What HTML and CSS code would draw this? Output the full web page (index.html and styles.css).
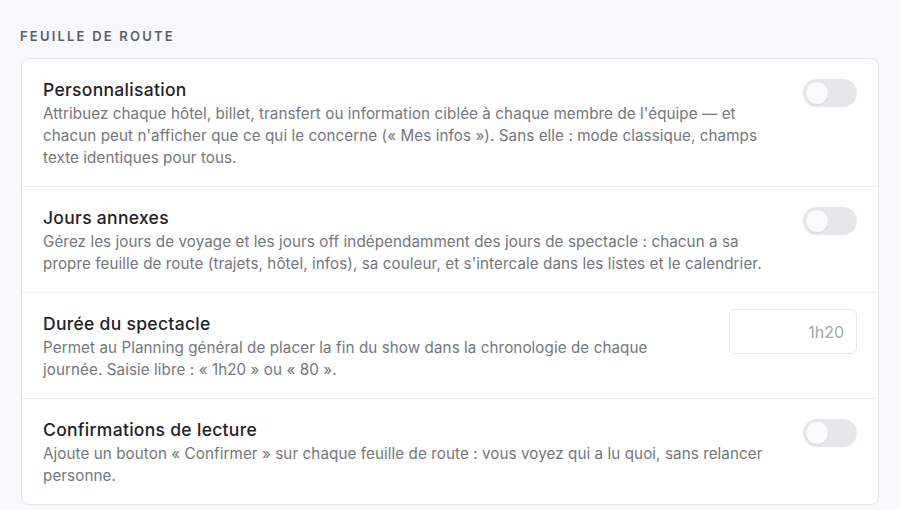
FILE: index.html
```html
<!DOCTYPE html>
<html lang="fr">
<head>
<meta charset="utf-8">
<title>Feuille de route</title>
<link rel="stylesheet" href="styles.css">
</head>
<body>
<section class="section">
  <h2 class="section-title">FEUILLE DE ROUTE</h2>
  <div class="card">
    <div class="row">
      <div class="text">
        <div class="title">Personnalisation</div>
        <p class="desc">Attribuez chaque hôtel, billet, transfert ou information ciblée à chaque membre de l'équipe — et chacun peut n'afficher que ce qui le concerne (« Mes infos »). Sans elle : mode classique, champs texte identiques pour tous.</p>
      </div>
      <span class="toggle"><span class="knob"></span></span>
    </div>
    <div class="row">
      <div class="text">
        <div class="title">Jours annexes</div>
        <p class="desc">Gérez les jours de voyage et les jours off indépendamment des jours de spectacle : chacun a sa propre feuille de route (trajets, hôtel, infos), sa couleur, et s'intercale dans les listes et le calendrier.</p>
      </div>
      <span class="toggle"><span class="knob"></span></span>
    </div>
    <div class="row">
      <div class="text">
        <div class="title">Durée du spectacle</div>
        <p class="desc">Permet au Planning général de placer la fin du show dans la chronologie de chaque journée. Saisie libre : « 1h20 » ou « 80 ».</p>
      </div>
      <input class="field" type="text" value="" placeholder="1h20">
    </div>
    <div class="row">
      <div class="text">
        <div class="title">Confirmations de lecture</div>
        <p class="desc">Ajoute un bouton « Confirmer » sur chaque feuille de route : vous voyez qui a lu quoi, sans relancer personne.</p>
      </div>
      <span class="toggle"><span class="knob"></span></span>
    </div>
  </div>
</section>
</body>
</html>
```
FILE: styles.css
```css
html, body {
  margin: 0;
  padding: 0;
  background: #f8f9fa;
}
body {
  font-family: Inter, "Open Sans", sans-serif;
  color: #1f2328;
}
.section {
  padding: 28px 21px 0 21px;
}
.section-title {
  margin: 0 0 14px -1px;
  font-size: 13px;
  font-weight: 600;
  letter-spacing: 2.2px;
  color: #5a6068;
  line-height: 16px;
}
.card {
  background: #ffffff;
  border: 1px solid #e4e6e9;
  border-radius: 8px;
}
.row {
  display: flex;
  align-items: flex-start;
  gap: 22px;
  padding: 18px 21px 17px 21px;
  border-top: 1px solid #eef0f2;
}
.row:first-child {
  border-top: none;
}
.text {
  flex: 1;
  min-width: 0;
}
.title {
  font-size: 17.5px;
  font-weight: 500;
  letter-spacing: 0.3px;
  line-height: 26px;
  color: #1f2226;
}
.desc {
  margin: 0;
  font-size: 15.2px;
  letter-spacing: 0.08px;
  line-height: 22px;
  color: #74777c;
}
.toggle {
  flex: none;
  margin-top: 2px;
  width: 54px;
  height: 28px;
  border-radius: 14px;
  background: #e6e7ea;
  display: flex;
  align-items: center;
  padding: 3px;
  box-sizing: border-box;
}
.knob {
  width: 22px;
  height: 22px;
  border-radius: 50%;
  background: #fbfbfc;
  box-shadow: 0 1px 2px rgba(0,0,0,0.08);
}
.field {
  flex: none;
  width: 128px;
  height: 45px;
  box-sizing: border-box;
  margin-top: -2px;
  border: 1px solid #e4e6e9;
  border-radius: 6px;
  background: #fff;
  padding: 0 12px;
  text-align: right;
  font-family: Inter, "Open Sans", sans-serif;
  font-size: 16px;
  color: #9a9da2;
  outline: none;
}
.field::placeholder {
  color: #a3a6aa;
}
```
